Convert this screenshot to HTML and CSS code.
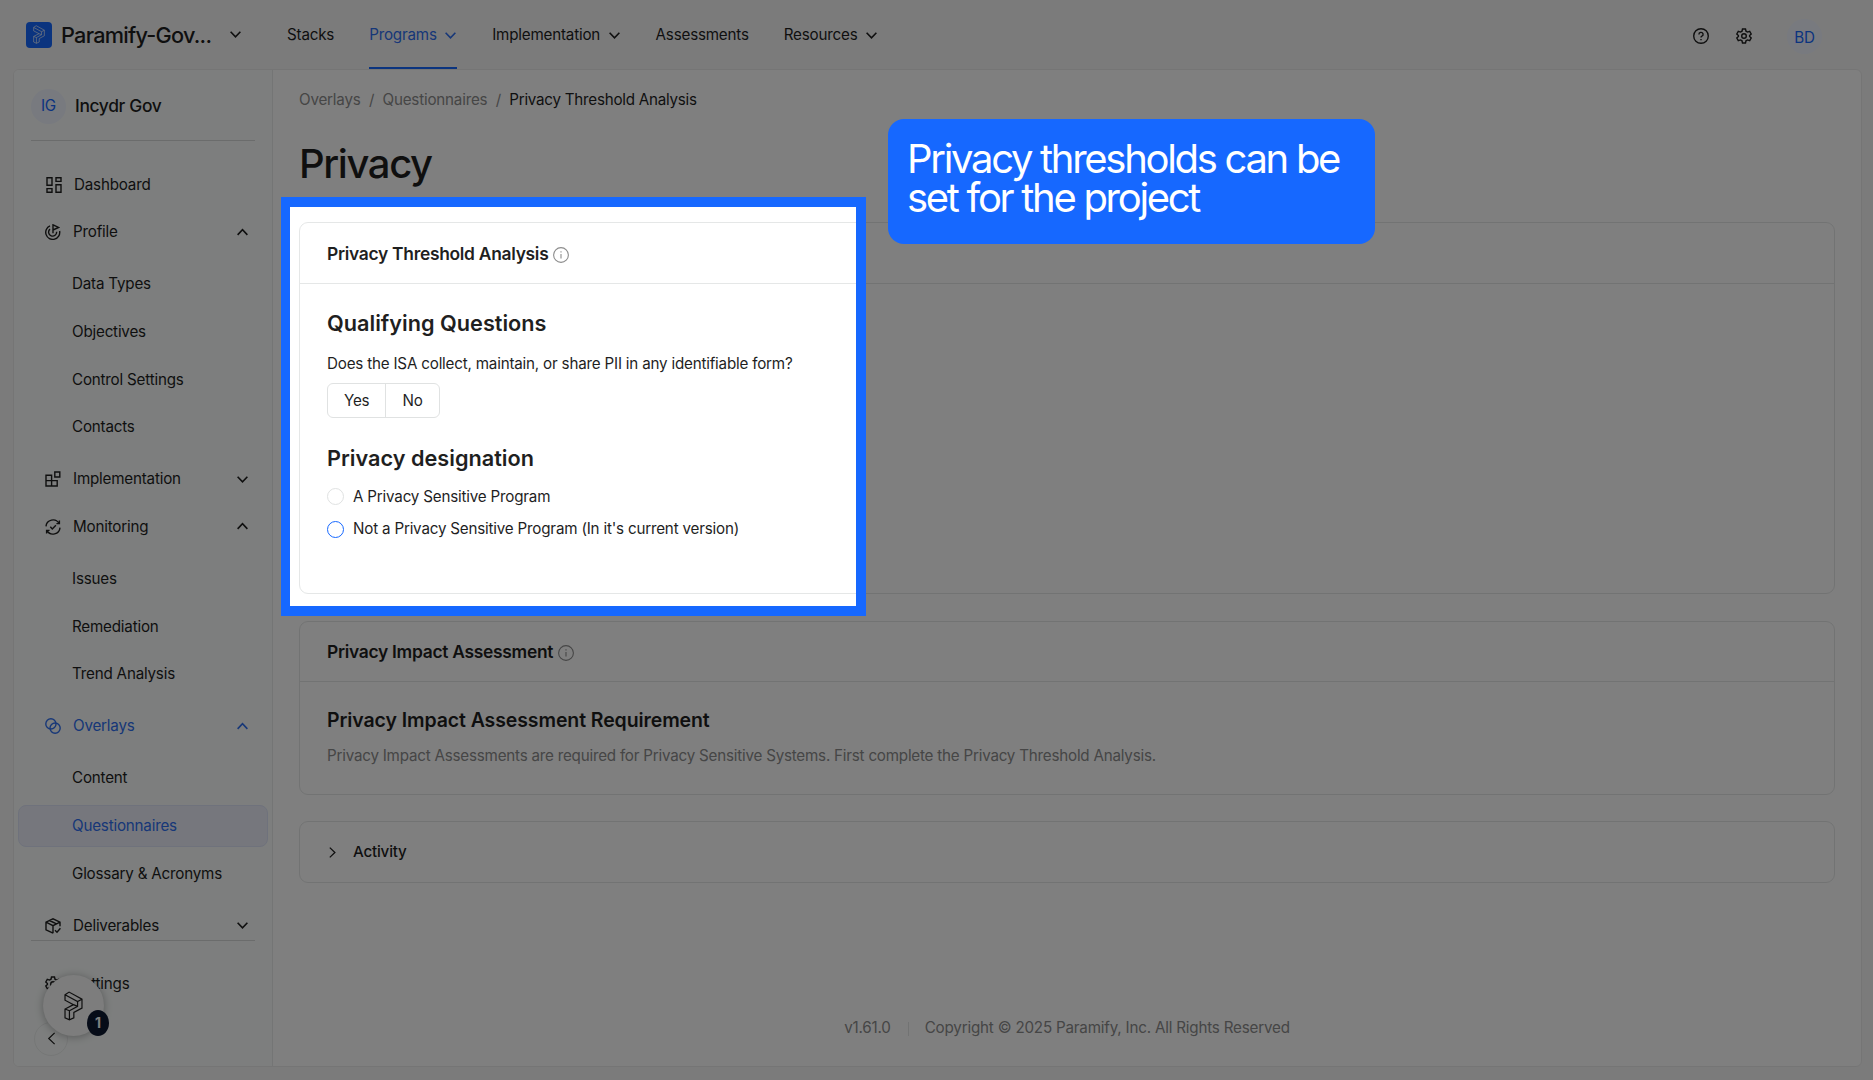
FILE: index.html
```html
<!DOCTYPE html>
<html lang="en">
<head>
    <meta charset="utf-8">
    <meta name="viewport" content="width=device-width, initial-scale=1.0">
    <title>Privacy Threshold Analysis</title>
    <link rel="stylesheet" href="styles.css">
</head>
<body>
    <!-- Icon sprite -->
    <svg class="sprite">
        <symbol id="logo" viewBox="0 0 56 88">
            <path d="M3 11 15 3 53 24V50L29 63V79L16 85 3 79V53L28 40 3 27ZM3 11 40 31 53 24M40 31V45L16 58V85M3 53 16 58M28 40 40 45"/>
        </symbol>
        <symbol id="down" viewBox="0 0 12 12"><path d="M1.5 3.5 6 8.2l4.5-4.7"/></symbol>
        <symbol id="up" viewBox="0 0 12 12"><path d="M1.5 8.2 6 3.5l4.5 4.7"/></symbol>
        <symbol id="dashboard" viewBox="0 0 16 16">
            <path d="M1 .8h5v7.4H1zM10 .8h5v3.6h-5zM1 11.6h5v3.6H1zM10 7.8h5v7.4h-5z"/>
        </symbol>
        <symbol id="profile" viewBox="0 0 16 16">
            <path d="M5 1.9A7 7 0 1 0 14.6 7M5 5.1a4 4 0 1 0 6.6 2.6M8 9.2V.8l5.6 2.6L8 6"/>
        </symbol>
        <symbol id="blocks" viewBox="0 0 16 16">
            <path d="M1 4.2h5.6v5.4h5.6V15H1zM1 9.6h5.6V15M9.8 1h5v5h-5z"/>
        </symbol>
        <symbol id="monitor" viewBox="0 0 16 16">
            <path d="M1 7.4A7 7 0 0 1 14 4.4M15 8.6A7 7 0 0 1 2 11.6M14.4 1.6v3h-3M1.6 14.4v-3h3M5.3 7.8 7.3 10l3.6-3.8"/>
        </symbol>
        <symbol id="overlays" viewBox="0 0 16 16">
            <circle cx="5.9" cy="5.9" r="5.1"/><circle cx="10.1" cy="10.1" r="5.1"/>
        </symbol>
        <symbol id="box" viewBox="0 0 16 16">
            <path d="M8 15.2 1 11.8V4.2L8 .8l7 3.4v4M1 4.2l7 3.4 7-3.4M8 7.6v7.6M4.5 2.5l7 3.4M10 12.2l2 2 3.4-4"/>
        </symbol>
        <symbol id="gear" viewBox="0 0 16 16">
            <path d="M6.5 1h3l.5 2.2 1.5.9 2.2-.7 1.5 2.6-1.6 1.5v1l1.6 1.5-1.5 2.6-2.2-.7-1.5.9-.5 2.2h-3L6 12.8l-1.5-.9-2.2.7L.8 10l1.6-1.5v-1L.8 6l1.5-2.6 2.2.7L6 3.2Z"/>
            <circle cx="8" cy="8" r="2.3"/>
        </symbol>
        <symbol id="help" viewBox="0 0 16 16">
            <circle cx="8" cy="8" r="7.3"/>
            <path d="M5.9 6.4a2.1 2 0 1 1 3 1.8q-.9.4-.9 1.3M8 11v1.2"/>
        </symbol>
        <symbol id="info" viewBox="0 0 16 16">
            <circle cx="8" cy="8" r="7.4"/><path d="M8 7v4.5M8 4.3v1.2"/>
        </symbol>
    </svg>

    <header class="topbar">
        <div class="brand">
            <span class="brand-logo"><svg><use href="#logo"/></svg></span>
            <span class="brand-name">Paramify-Gov...</span>
            <svg class="chevron"><use href="#down"/></svg>
        </div>
        <nav class="nav">
            <a class="nav-item">Stacks</a>
            <a class="nav-item active">Programs <svg class="chevron"><use href="#down"/></svg></a>
            <a class="nav-item">Implementation <svg class="chevron"><use href="#down"/></svg></a>
            <a class="nav-item">Assessments</a>
            <a class="nav-item">Resources <svg class="chevron"><use href="#down"/></svg></a>
        </nav>
        <div class="tools">
            <svg class="icon"><use href="#help"/></svg>
            <svg class="icon"><use href="#gear"/></svg>
            <span class="avatar">BD</span>
        </div>
    </header>

    <div class="layout">
        <aside class="sidebar">
            <div class="project">
                <span class="avatar">IG</span>
                <span class="project-name">Incydr Gov</span>
            </div>
            <div class="menu">
                <div class="item first"><svg class="icon"><use href="#dashboard"/></svg>Dashboard</div>
                <div class="item"><svg class="icon"><use href="#profile"/></svg>Profile<svg class="chevron"><use href="#up"/></svg></div>
                <div class="submenu">
                    <div class="item">Data Types</div>
                    <div class="item">Objectives</div>
                    <div class="item">Control Settings</div>
                    <div class="item">Contacts</div>
                </div>
                <div class="item"><svg class="icon"><use href="#blocks"/></svg>Implementation<svg class="chevron"><use href="#down"/></svg></div>
                <div class="item"><svg class="icon"><use href="#monitor"/></svg>Monitoring<svg class="chevron"><use href="#up"/></svg></div>
                <div class="submenu">
                    <div class="item">Issues</div>
                    <div class="item">Remediation</div>
                    <div class="item">Trend Analysis</div>
                </div>
                <div class="item open"><svg class="icon"><use href="#overlays"/></svg>Overlays<svg class="chevron"><use href="#up"/></svg></div>
                <div class="submenu">
                    <div class="item">Content</div>
                    <div class="item selected">Questionnaires</div>
                    <div class="item">Glossary &amp; Acronyms</div>
                </div>
                <div class="item"><svg class="icon"><use href="#box"/></svg>Deliverables<svg class="chevron"><use href="#down"/></svg></div>
            </div>
            <div class="sidebar-bottom">
                <div class="item"><svg class="icon"><use href="#gear"/></svg>Settings</div>
                <button class="collapse"><svg><use href="#down"/></svg></button>
            </div>
        </aside>

        <main class="content">
            <div class="breadcrumb">
                <span>Overlays</span><span class="sep">/</span><span>Questionnaires</span><span class="sep">/</span><span class="current">Privacy Threshold Analysis</span>
            </div>
            <h1>Privacy</h1>

            <section class="card threshold">
                <div class="card-head"><span>Privacy Threshold Analysis</span><svg><use href="#info"/></svg></div>
                <div class="card-body">
                    <h3>Qualifying Questions</h3>
                    <p class="question">Does the ISA collect, maintain, or share PII in any identifiable form?</p>
                    <div class="toggle">
                        <button>Yes</button>
                        <button>No</button>
                    </div>
                    <h3>Privacy designation</h3>
                    <label class="radio"><span class="dot"></span><span>A Privacy Sensitive Program</span></label>
                    <label class="radio"><span class="dot hover"></span><span>Not a Privacy Sensitive Program (In it's current version)</span></label>
                </div>
            </section>

            <section class="card impact">
                <div class="card-head"><span>Privacy Impact Assessment</span><svg><use href="#info"/></svg></div>
                <div class="card-body">
                    <h4>Privacy Impact Assessment Requirement</h4>
                    <p class="hint">Privacy Impact Assessments are required for Privacy Sensitive Systems. First complete the Privacy Threshold Analysis.</p>
                </div>
            </section>

            <section class="card activity">
                <svg><use href="#down"/></svg>
                <span>Activity</span>
            </section>

            <footer class="footer">
                <span class="version">v1.61.0</span>
                <span class="copyright">Copyright © 2025 Paramify, Inc. All Rights Reserved</span>
            </footer>
        </main>
    </div>

    <!-- Floating help launcher -->
    <div class="launcher">
        <svg><use href="#logo"/></svg>
        <span class="launcher-count">1</span>
    </div>

    <!-- Tour step: spotlight and callout -->
    <div class="spotlight"></div>
    <div class="callout">Privacy thresholds can be set for the project</div>
</body>
</html>
```
FILE: styles.css
```css
* {
    box-sizing: border-box;
}

body {
    width: 1873px;
    height: 1080px;
    margin: 0;
    overflow: hidden;
    position: relative;
    font-family: Inter, "Liberation Sans", sans-serif;
    font-size: 15.2px;
    line-height: 24px;
    letter-spacing: -0.2px;
    background: #f7f7f7;
    color: #1f1f1f;
}

h1, h3, h4, p {
    margin: 0;
}

svg {
    fill: none;
    stroke: currentColor;
    stroke-width: 1.4;
    flex-shrink: 0;
}

button {
    font: inherit;
    letter-spacing: inherit;
    color: inherit;
    padding: 0;
}

.sprite {
    display: none;
}

.icon {
    width: 16px;
    height: 16px;
}

.chevron {
    width: 13px;
    height: 13px;
    stroke-width: 1.5;
}

.avatar {
    width: 35px;
    height: 35px;
    border-radius: 50%;
    background: #f0f4ff;
    color: #1668ff;
    display: flex;
    align-items: center;
    justify-content: center;
}

/* Top bar */
.topbar {
    height: 69px;
    padding: 0 51px 0 26px;
    display: flex;
    align-items: center;
}

.brand {
    width: 261px;
    display: flex;
    align-items: center;
}

.brand-logo {
    width: 26px;
    height: 26px;
    border-radius: 4px;
    background: #1668ff;
    color: #fff;
    display: flex;
    align-items: center;
    justify-content: center;
}

.brand-logo svg {
    width: 12px;
    height: 19px;
    stroke-width: 3;
}

.brand-name {
    width: 168px;
    margin-left: 9px;
    font-size: 21.7px;
    font-weight: 500;
    letter-spacing: -0.75px;
}

.nav {
    display: flex;
    gap: 35px;
    height: 69px;
}

.nav-item {
    display: flex;
    align-items: center;
    gap: 7.5px;
    padding-top: 3px;
    border-bottom: 2px solid transparent;
}

.nav-item.active {
    color: #2f6ff0;
    border-color: #1668ff;
}

.tools {
    margin-left: auto;
    padding-top: 3px;
    display: flex;
    align-items: center;
    gap: 27px;
}

.tools .avatar {
    margin-left: 8px;
    padding-top: 3px;
}

/* Frame */
.layout {
    margin: 0 11px 0 13px;
    height: 998px;
    display: flex;
    background: #fff;
    border: 1px solid #ebebeb;
    border-radius: 6px;
    overflow: hidden;
}

/* Sidebar */
.sidebar {
    width: 259px;
    background: #fafdfc;
    border-right: 1px solid #e8eaea;
}

.project {
    height: 71px;
    margin: 0 17px;
    padding-top: 2px;
    border-bottom: 1px solid #d6d9d8;
    display: flex;
    align-items: center;
    gap: 9px;
}

.project-name {
    font-size: 17.4px;
    font-weight: 500;
    letter-spacing: -0.35px;
}

.menu {
    height: 800px;
    margin: 0 4px;
    padding-top: 22.3px;
    overflow: hidden;
    position: relative;
}

.menu::after {
    content: '';
    position: absolute;
    left: 13px;
    right: 13px;
    bottom: 0;
    border-bottom: 1px solid #d6d9d8;
}

.item {
    height: 42.5px;
    margin-bottom: 5.2px;
    padding: 0 18px 0 26px;
    display: flex;
    align-items: center;
    border: 1px solid transparent;
    border-radius: 8px;
}

.item .icon {
    margin-right: 12px;
}

.item.first {
    padding-left: 27px;
}

.item .chevron {
    margin-left: auto;
}

.submenu {
    padding: 4.3px 0;
}

.submenu .item {
    padding-left: 53px;
}

.item.open {
    color: #2f6ff0;
}

.submenu .item.selected {
    color: #2f6ff0;
    background: #eceffa;
    border-color: #dfe4f8;
}

.sidebar-bottom {
    padding: 22px 4px 0;
}

.collapse {
    width: 34px;
    height: 34px;
    margin: 16px 0 0 16px;
    border: 1px solid #eceeee;
    border-radius: 50%;
    background: #fafdfc;
    display: flex;
    align-items: center;
    justify-content: center;
}

.collapse svg {
    width: 15px;
    height: 15px;
    transform: rotate(90deg);
    stroke-width: 1;
}

/* Content */
.content {
    flex: 1;
    padding: 18px 26px 0;
    display: flex;
    flex-direction: column;
}

.breadcrumb {
    display: flex;
    color: #8c8c8c;
}

.sep {
    margin: 0 8.3px;
}

.breadcrumb .current {
    color: #1f1f1f;
    letter-spacing: -0.25px;
}

h1 {
    margin: 26px 0 32px;
    font-size: 40px;
    line-height: 52px;
    font-weight: 500;
    letter-spacing: -1.4px;
}

h3 {
    font-size: 21.7px;
    line-height: 30px;
    font-weight: 600;
    letter-spacing: 0;
}

h4 {
    font-size: 19.5px;
    line-height: 28px;
    font-weight: 600;
    letter-spacing: -0.1px;
}

.card {
    border: 1px solid #e5e7e7;
    border-radius: 9px;
    margin-bottom: 26px;
}

.card-head {
    height: 61px;
    padding: 1px 27px 0;
    border-bottom: 1px solid #e5e7e7;
    display: flex;
    align-items: center;
    gap: 5px;
    font-size: 17.4px;
    font-weight: 600;
    letter-spacing: -0.28px;
}

.card-head svg {
    width: 16px;
    height: 16px;
    margin-top: 2px;
    color: #8c8c8c;
    stroke-width: 1.1;
}

.card-body {
    padding: 24px 27px;
}

.threshold {
    height: 372px;
    margin-bottom: 27px;
}

.question {
    margin: 13.5px 0 7.5px;
}

.toggle {
    display: flex;
    width: fit-content;
    height: 35px;
    margin-bottom: 25px;
    border: 1px solid #e0e2e2;
    border-radius: 6px;
}

.toggle button {
    padding: 1px 16px 0;
    border: none;
    background: none;
}

.toggle button + button {
    border-left: 1px solid #e0e2e2;
}

.radio {
    display: flex;
    align-items: center;
    gap: 9px;
    margin: 8.5px 0;
}

h3 + .radio {
    margin-top: 11.5px;
}

.dot {
    width: 17px;
    height: 17px;
    border: 1px solid #e0e2e2;
    border-radius: 50%;
}

.dot.hover {
    border-color: #1668ff;
}

.impact {
    height: 174px;
}

.impact .card-head {
    height: 60px;
    padding-top: 0;
}

.hint {
    margin-top: 10px;
    color: #8c8c8c;
    letter-spacing: -0.22px;
}

.activity {
    height: 62px;
    padding: 0 26px;
    display: flex;
    align-items: center;
    gap: 14px;
    font-weight: 500;
}

.activity svg {
    width: 13px;
    height: 13px;
    transform: rotate(-90deg);
    stroke-width: 1.2;
}

.footer {
    margin: auto 0 26px;
    display: flex;
    justify-content: center;
    color: #8c8c8c;
}

.copyright {
    margin-left: 17px;
    padding-left: 17px;
    position: relative;
}

.copyright::before {
    content: '';
    position: absolute;
    left: 0;
    top: 6px;
    height: 14px;
    border-left: 1px solid #e5e7e7;
}

/* Floating launcher, above the sidebar */
.launcher {
    position: absolute;
    left: 43px;
    top: 975px;
    width: 61px;
    height: 61px;
    border-radius: 50%;
    background: #fafafa;
    box-shadow: 0 1px 8px rgba(0, 0, 0, 0.3);
    display: flex;
    align-items: center;
    justify-content: center;
}

.launcher svg {
    width: 19px;
    height: 30px;
    stroke-width: 3.6;
}

.launcher-count {
    position: absolute;
    left: 44px;
    top: 35px;
    width: 22px;
    height: 26px;
    border-radius: 50%;
    background: #0d1830;
    color: #fff;
    font-size: 14px;
    font-weight: 700;
    line-height: 26px;
    text-align: center;
}

/* Spotlight dims everything outside of its frame */
.spotlight {
    position: absolute;
    left: 281px;
    top: 197px;
    width: 585px;
    height: 419px;
    border: 10px solid #1668ff;
    border-left-width: 9px;
    box-shadow: 0 0 0 9999px rgba(0, 0, 0, 0.5);
}

.callout {
    position: absolute;
    left: 888px;
    top: 119px;
    width: 487px;
    height: 125px;
    padding: 20px 19px;
    border-radius: 16px;
    background: #1668ff;
    color: #fff;
    font-size: 40px;
    line-height: 39px;
    letter-spacing: -2.3px;
}
```
